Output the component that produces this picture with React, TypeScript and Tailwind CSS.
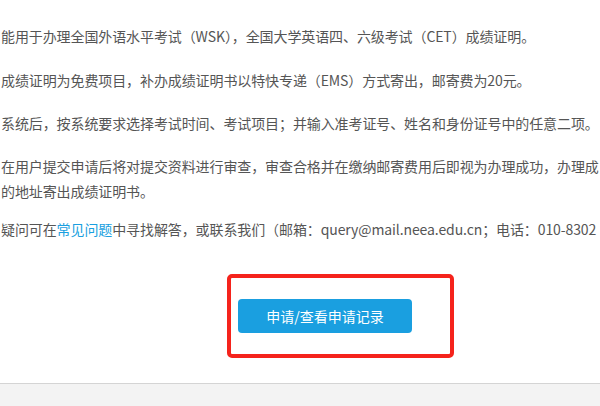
import React from "react";

export default function App() {
  const font = {
    fontFamily: '"Noto Sans CJK SC", "Noto Sans", sans-serif',
  };
  return (
    <div
      className="w-[600px] h-[406px] bg-white flex flex-col overflow-hidden text-[14px] leading-[25px] text-[#555555]"
      style={font}
    >
      <div className="flex flex-col pl-[1px] whitespace-nowrap tracking-[-0.1px]">
        <p className="mt-[24px]">
          能用于办理全国外语水平考试（WSK），全国大学英语四、六级考试（CET）成绩证明。
        </p>
        <p className="mt-[19px]">
          成绩证明为免费项目，补办成绩证明书以特快专递（EMS）方式寄出，邮寄费为20元。
        </p>
        <p className="mt-[18px]">
          系统后，按系统要求选择考试时间、考试项目；并输入准考证号、姓名和身份证号中的任意二项。
        </p>
        <p className="mt-[18px]">
          在用户提交申请后将对提交资料进行审查，审查合格并在缴纳邮寄费用后即视为办理成功，办理成
          <br />
          的地址寄出成绩证明书。
        </p>
        <p className="mt-[13px]">
          疑问可在<span className="text-[#1a9fe0]">常见问题</span>
          中寻找解答，或联系我们（邮箱：query@mail.neea.edu.cn；电话：010-8302
        </p>
      </div>
      <div className="flex mt-[32px] pl-[227px]">
        <div className="border-[4px] border-[#f5231c] rounded-[5px] pl-[7px] pr-[38px] py-[21px]">
          <button className="w-[174px] h-[34px] rounded-[4px] bg-[#1a9fe0] text-white text-[14px] leading-[34px]">
            申请/查看申请记录
          </button>
        </div>
      </div>
      <div className="mt-auto h-[23px] border-t border-[#d4d4d4] bg-[#f3f3f3]" />
    </div>
  );
}
